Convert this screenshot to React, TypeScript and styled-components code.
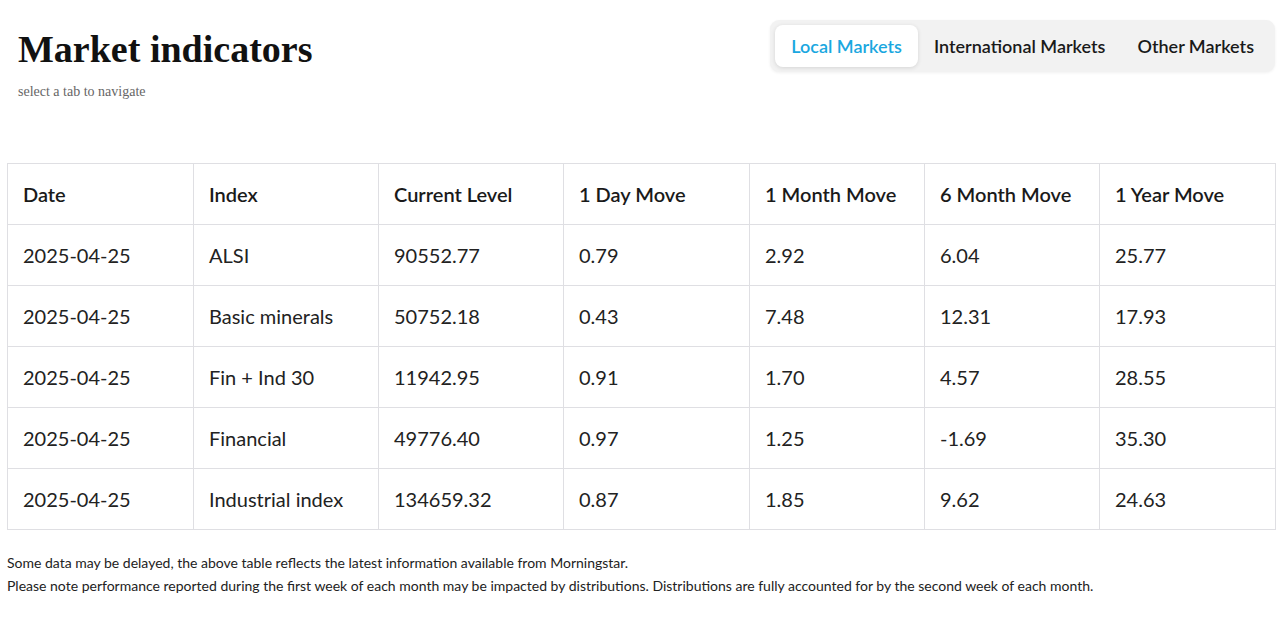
import React, { useState } from "react"
import styled, { createGlobalStyle } from "styled-components"

const GlobalStyle = createGlobalStyle`
  body {
    margin: 0;
    padding: 7px;
    font-family: Lato, "Liberation Sans", sans-serif;
    color: #222;
    background: #fff;
  }
`

const Header = styled.div`
  display: flex;
  justify-content: space-between;
  align-items: flex-start;
  height: 156px;
`

const TitleBlock = styled.div`
  padding: 20px 0 0 11px;
`

const Title = styled.h1`
  margin: 0;
  font-family: "Liberation Serif", serif;
  font-size: 38px;
  font-weight: bold;
  line-height: 44px;
  color: #111;
`

const Subtitle = styled.div`
  margin-top: 13px;
  font-family: "Liberation Serif", serif;
  font-size: 14px;
  color: #666;
`

const Tabs = styled.div`
  display: flex;
  margin-top: 13px;
  padding: 5px;
  background: #f2f2f2;
  border-radius: 9px;
  box-shadow: 0 1px 3px rgba(0, 0, 0, 0.06);
`

const Tab = styled.button<{ $active?: boolean }>`
  border: none;
  font-family: Lato, sans-serif;
  font-size: 18px;
  font-weight: 600;
  height: 42px;
  padding: 0 16px;
  border-radius: 8px;
  cursor: pointer;
  background: ${(p) => (p.$active ? "#fff" : "transparent")};
  color: ${(p) => (p.$active ? "#1aa7e0" : "#1a1a1a")};
  box-shadow: ${(p) => (p.$active ? "0 1px 4px rgba(0,0,0,0.12)" : "none")};
`

const Table = styled.table`
  width: 1268px;
  border-collapse: collapse;
  table-layout: fixed;
`

const Th = styled.th`
  border: 1px solid #dfdfe3;
  text-align: left;
  font-weight: 600;
  font-size: 20px;
  height: 60px;
  padding: 0 15px;
  color: #1a1a1a;
`

const Td = styled.td`
  border: 1px solid #dfdfe3;
  font-size: 20px;
  height: 60px;
  padding: 0 15px;
  color: #222;
`

const Notes = styled.div`
  margin-top: 21px;
  font-size: 14px;
  line-height: 23px;
  color: #222;
`

const columns = ["Date", "Index", "Current Level", "1 Day Move", "1 Month Move", "6 Month Move", "1 Year Move"]
const widths = [186, 185, 185, 186, 175, 175, 176]

const rows = [
  ["2025-04-25", "ALSI", "90552.77", "0.79", "2.92", "6.04", "25.77"],
  ["2025-04-25", "Basic minerals", "50752.18", "0.43", "7.48", "12.31", "17.93"],
  ["2025-04-25", "Fin + Ind 30", "11942.95", "0.91", "1.70", "4.57", "28.55"],
  ["2025-04-25", "Financial", "49776.40", "0.97", "1.25", "-1.69", "35.30"],
  ["2025-04-25", "Industrial index", "134659.32", "0.87", "1.85", "9.62", "24.63"],
]

const tabs = ["Local Markets", "International Markets", "Other Markets"]

export default function App() {
  const [active, setActive] = useState(0)
  return (
    <>
      <GlobalStyle />
      <Header>
        <TitleBlock>
          <Title>Market indicators</Title>
          <Subtitle>select a tab to navigate</Subtitle>
        </TitleBlock>
        <Tabs>
          {tabs.map((t, i) => (
            <Tab key={t} $active={i === active} onClick={() => setActive(i)}>
              {t}
            </Tab>
          ))}
        </Tabs>
      </Header>
      <Table>
        <colgroup>
          {widths.map((w, i) => (
            <col key={i} style={{ width: w }} />
          ))}
        </colgroup>
        <thead>
          <tr>
            {columns.map((c) => (
              <Th key={c}>{c}</Th>
            ))}
          </tr>
        </thead>
        <tbody>
          {rows.map((r, i) => (
            <tr key={i}>
              {r.map((v, j) => (
                <Td key={j}>{v}</Td>
              ))}
            </tr>
          ))}
        </tbody>
      </Table>
      <Notes>
        Some data may be delayed, the above table reflects the latest information available from Morningstar.
        <br />
        Please note performance reported during the first week of each month may be impacted by distributions. Distributions are fully accounted for by the second week of each month.
      </Notes>
    </>
  )
}
